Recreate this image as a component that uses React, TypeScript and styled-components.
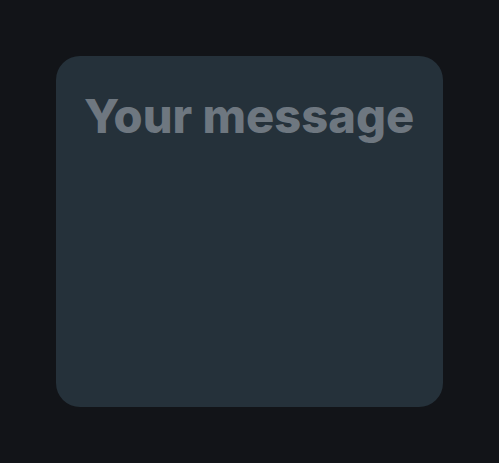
import React from "react";
import styled, { createGlobalStyle } from "styled-components";

const Global = createGlobalStyle`
  html, body { margin: 0; padding: 0; background: #121418; }
  body { width: 499px; height: 463px; overflow: hidden; }
`;

const Page = styled.div`
  box-sizing: border-box;
  width: 499px;
  height: 463px;
  padding: 56px;
  display: flex;
  align-items: flex-start;
  justify-content: center;
`;

const MessageBox = styled.textarea`
  box-sizing: border-box;
  width: 387px;
  height: 351px;
  margin: 0;
  padding: 28px 16px 28px 28px;
  border: none;
  outline: none;
  resize: none;
  border-radius: 24px;
  background: #25313a;
  color: #c9d1d9;
  font-family: Inter, "Noto Sans", sans-serif;
  font-weight: 800;
  font-size: 47px;
  line-height: 64px;
  &::placeholder {
    color: #6e7780;
    opacity: 1;
  }
`;

export default function App() {
  return (
    <>
      <Global />
      <Page>
        <MessageBox placeholder="Your message" />
      </Page>
    </>
  );
}
